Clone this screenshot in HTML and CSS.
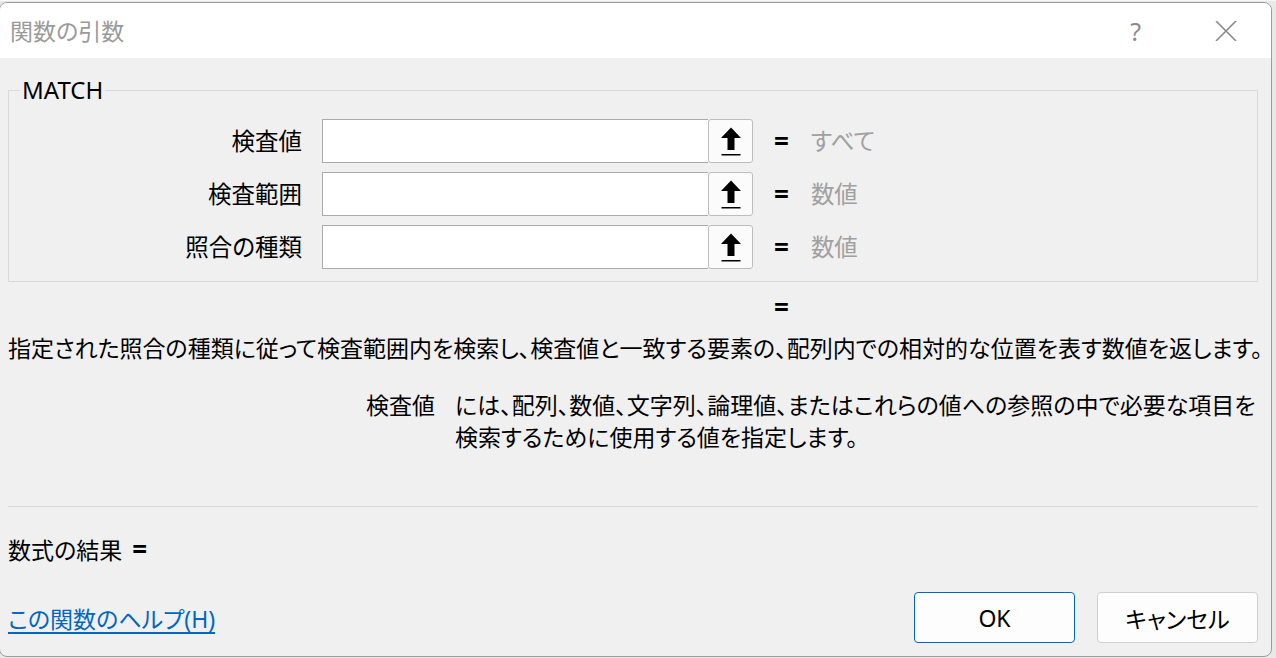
FILE: index.html
```html
<!DOCTYPE html>
<html lang="ja">
<head>
<meta charset="utf-8">
<title>関数の引数</title>
<link rel="stylesheet" href="styles.css">
</head>
<body>
<div class="dialog">
  <header class="titlebar">
    <span class="title">関数の引数</span>
    <div class="tb-actions">
      <span class="tb-help">?</span>
      <svg class="tb-close" width="22" height="20" viewBox="0 0 22 20"><path d="M1 0 L21 20 M21 0 L1 20" stroke="#8a8a8a" stroke-width="1.6" fill="none"/></svg>
    </div>
  </header>
  <main class="content">
    <fieldset class="group">
      <legend class="group-title">MATCH</legend>
      <div class="arg-row">
        <span class="arg-label">検査値</span>
        <div class="field"><div class="input"></div><button class="ref-btn"><svg width="22" height="30" viewBox="0 0 22 30"><path d="M11 0.5 L21 11 L14.5 11 L14.5 23 L7.5 23 L7.5 11 L1 11 Z" fill="#000"/><rect x="1.5" y="27" width="19" height="1.5" fill="#000"/></svg></button></div>
        <span class="eq">=</span>
        <span class="val">すべて</span>
      </div>
      <div class="arg-row">
        <span class="arg-label">検査範囲</span>
        <div class="field"><div class="input"></div><button class="ref-btn"><svg width="22" height="30" viewBox="0 0 22 30"><path d="M11 0.5 L21 11 L14.5 11 L14.5 23 L7.5 23 L7.5 11 L1 11 Z" fill="#000"/><rect x="1.5" y="27" width="19" height="1.5" fill="#000"/></svg></button></div>
        <span class="eq">=</span>
        <span class="val">数値</span>
      </div>
      <div class="arg-row">
        <span class="arg-label">照合の種類</span>
        <div class="field"><div class="input"></div><button class="ref-btn"><svg width="22" height="30" viewBox="0 0 22 30"><path d="M11 0.5 L21 11 L14.5 11 L14.5 23 L7.5 23 L7.5 11 L1 11 Z" fill="#000"/><rect x="1.5" y="27" width="19" height="1.5" fill="#000"/></svg></button></div>
        <span class="eq">=</span>
        <span class="val">数値</span>
      </div>
    </fieldset>
    <div class="func-eq"><span class="eq">=</span></div>
    <p class="desc">指定された照合の種類に従って検査範囲内を検索し、検査値と一致する要素の、配列内での相対的な位置を表す数値を返します。</p>
    <div class="arg-help">
      <span class="arg-name">検査値</span>
      <p class="arg-text">には、配列、数値、文字列、論理値、またはこれらの値への参照の中で必要な項目を<br>検索するために使用する値を指定します。</p>
    </div>
    <hr class="sep">
    <div class="formula-result">数式の結果 <span class="eq">=</span></div>
    <div class="footer">
      <a class="help-link" href="#">この関数のヘルプ(H)</a>
      <div class="buttons">
        <button class="btn btn-primary">OK</button>
        <button class="btn">キャンセル</button>
      </div>
    </div>
  </main>
</div>
</body>
</html>
```
FILE: styles.css
```css
* { box-sizing: border-box; }
html, body {
  margin: 0;
  padding: 0;
  background: #e9e9e9;
  width: 1276px;
  height: 658px;
  overflow: hidden;
}
body {
  font-family: "Noto Sans", "Noto Sans CJK JP", sans-serif;
  font-size: 23px;
  color: #000;
  font-feature-settings: "palt";
  padding-top: 2px;
  border-top: 1px solid #f7f7f7;
}
.dialog {
  width: 1273px;
  height: 655px;
  margin-top: -1px;
  margin-left: -1px;
  background: #f0f0f0;
  border: 1px solid #9c9c9c;
  border-radius: 8px;
  overflow: hidden;
}
.titlebar {
  height: 55px;
  background: #fff;
  display: flex;
  align-items: center;
  justify-content: space-between;
  padding-left: 10px;
}
.title {
  color: #9a9a9a;
  font-size: 23px;
  line-height: 30px;
}
.tb-actions {
  display: flex;
  align-items: center;
  gap: 74px;
  padding-right: 34px;
}
.tb-help {
  color: #8a8a8a;
  font-family: "Noto Sans", sans-serif;
  font-size: 25px;
  line-height: 30px;
}
.content {
  padding: 0 13px 0 8px;
}
.group {
  margin: 17px 0 0 0;
  padding: 14px 0 12px 11px;
  border: 1px solid #d9d9d9;
  display: flex;
  flex-direction: column;
  gap: 9px;
  min-width: 0;
}
.group-title {
  padding: 0 2px;
  line-height: 30px;
  font-size: 24px;
}
.arg-row {
  display: flex;
  align-items: center;
  height: 44px;
}
.arg-label {
  width: 282px;
  text-align: right;
  line-height: 30px;
  font-size: 23.5px;
}
.field {
  display: flex;
  margin-left: 20px;
  height: 44px;
}
.input {
  width: 386px;
  height: 44px;
  background: #fff;
  border: 1px solid #ababab;
  border-right: 0;
}
.ref-btn {
  width: 45px;
  height: 44px;
  padding: 0;
  margin: 0;
  border: 1px solid #bdbdbd;
  border-radius: 3px;
  background: #fbfbfb;
  display: flex;
  align-items: center;
  justify-content: center;
}
.ref-btn svg { display: block; margin-top: 2px; }
.eq {
  font-family: "Noto Sans", sans-serif;
  font-weight: 700;
  font-size: 26px;
  line-height: 30px;
}
.arg-row .eq { margin-left: 21px; }
.val {
  margin-left: 22px;
  color: #a0a0a0;
  line-height: 30px;
  font-size: 23.5px;
}
.func-eq {
  margin-top: 10px;
  height: 32px;
  line-height: 32px;
  padding-left: 766px;
}
.desc {
  margin: 8px 0 0 0;
  line-height: 32px;
  white-space: nowrap;
}
.arg-help {
  display: flex;
  margin-top: 25px;
  line-height: 32px;
}
.arg-name {
  width: 427px;
  text-align: right;
  flex: none;
}
.arg-text {
  margin: 0 0 0 20px;
  white-space: nowrap;
}
.sep {
  margin: 53px 0 0 0;
  border: 0;
  border-top: 1px solid #d9d9d9;
  height: 0;
}
.formula-result {
  margin-top: 27px;
  line-height: 32px;
}
.formula-result .eq { margin-left: 4px; }
.footer {
  margin-top: 26px;
  display: flex;
  align-items: center;
  justify-content: space-between;
}
.help-link {
  color: #0067c0;
  text-decoration: underline;
  text-underline-offset: 4px;
  line-height: 32px;
  margin-top: 2px;
}
.buttons {
  display: flex;
  gap: 22px;
}
.btn {
  width: 161px;
  height: 51px;
  border: 1px solid #d0d0d0;
  border-radius: 4px;
  background: #fdfdfd;
  font-family: "Noto Sans", "Noto Sans CJK JP", sans-serif;
  font-feature-settings: "palt";
  font-size: 23px;
  color: #000;
  padding: 0;
}
.btn-primary {
  border-color: #0067c0;
}
```
